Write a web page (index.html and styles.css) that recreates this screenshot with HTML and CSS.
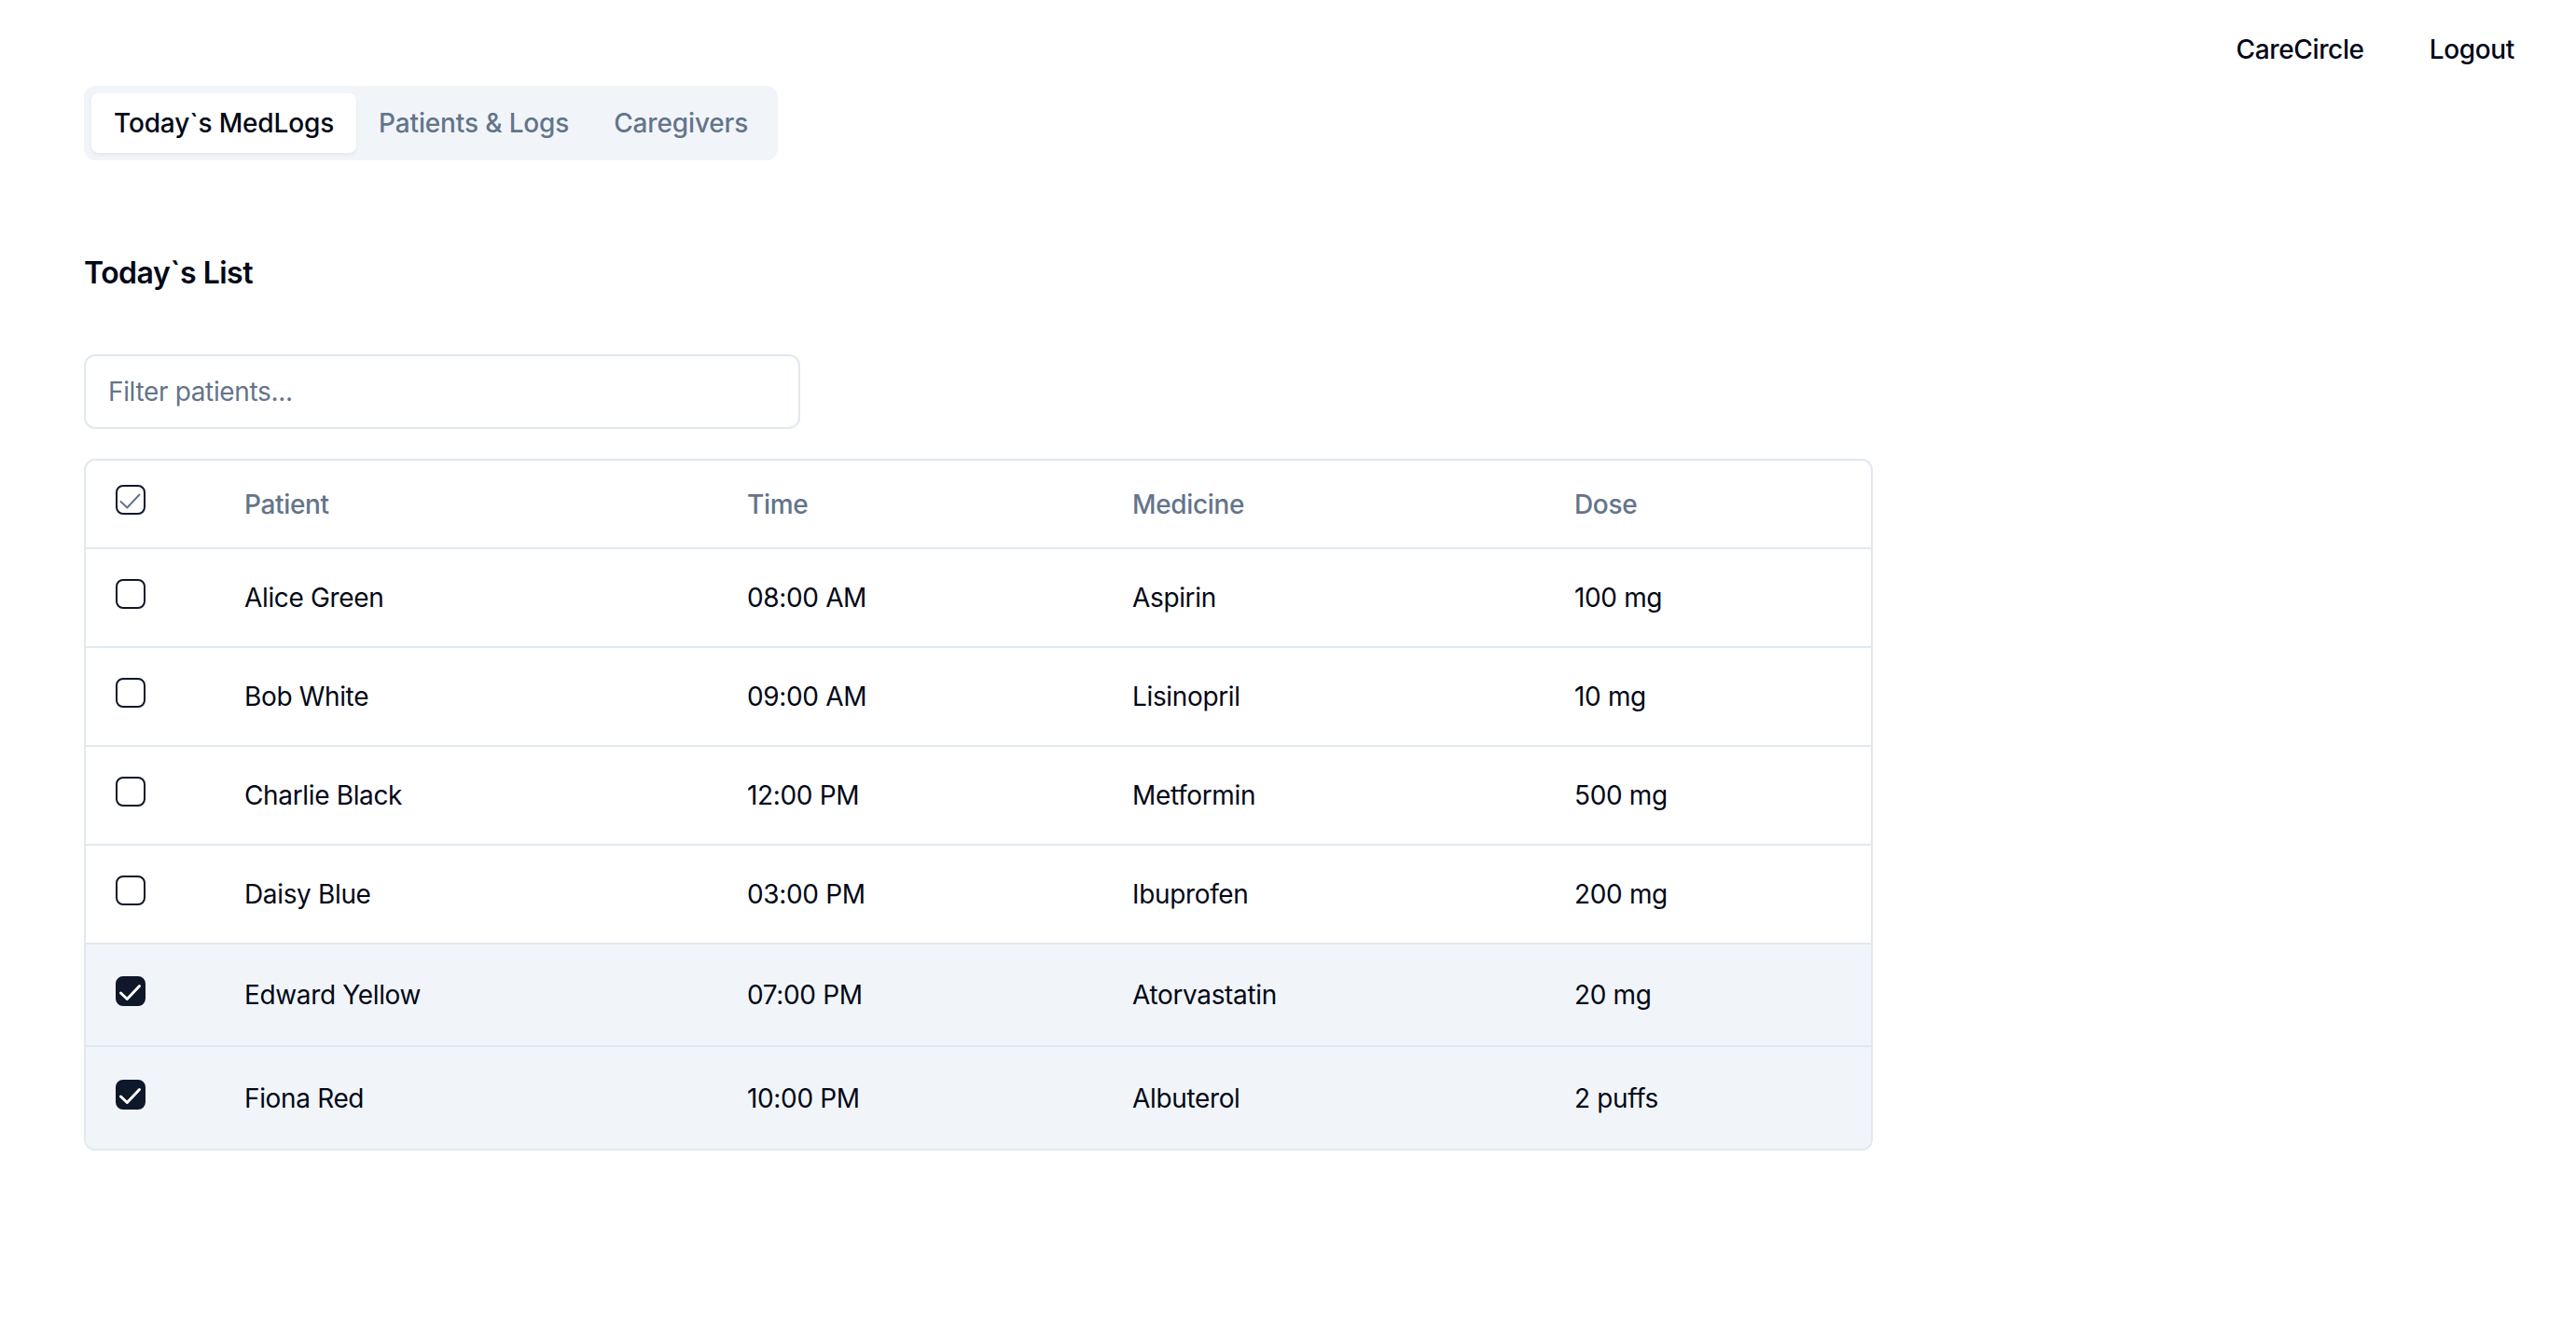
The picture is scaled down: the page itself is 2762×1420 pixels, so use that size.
FILE: index.html
```html
<!DOCTYPE html>
<html lang="en">
<head>
<meta charset="utf-8">
<title>CareCircle</title>
<link rel="stylesheet" href="styles.css">
</head>
<body>
<header class="topnav">
  <a class="navlink">CareCircle</a>
  <a class="navlink">Logout</a>
</header>
<main class="main">
  <div class="tabs">
    <button class="tab tab-active">Today`s MedLogs</button>
    <button class="tab">Patients &amp; Logs</button>
    <button class="tab">Caregivers</button>
  </div>
  <h2 class="title">Today`s List</h2>
  <div class="filter">Filter patients...</div>
  <div class="table-wrap">
    <table class="table">
      <colgroup>
        <col class="c-check"><col class="c-patient"><col class="c-time"><col class="c-med"><col class="c-dose">
      </colgroup>
      <thead>
        <tr class="head-row">
          <th><span class="cb cb-head"><svg viewBox="0 0 32 32"><path d="M5.5 18 L12.3 24.5 L25.5 10.5"/></svg></span></th>
          <th>Patient</th><th>Time</th><th>Medicine</th><th>Dose</th>
        </tr>
      </thead>
      <tbody>
        <tr class="row"><td><span class="cb"></span></td><td>Alice Green</td><td>08:00 AM</td><td>Aspirin</td><td>100 mg</td></tr>
        <tr class="row"><td><span class="cb"></span></td><td>Bob White</td><td>09:00 AM</td><td>Lisinopril</td><td>10 mg</td></tr>
        <tr class="row"><td><span class="cb"></span></td><td>Charlie Black</td><td>12:00 PM</td><td>Metformin</td><td>500 mg</td></tr>
        <tr class="row"><td><span class="cb"></span></td><td>Daisy Blue</td><td>03:00 PM</td><td>Ibuprofen</td><td>200 mg</td></tr>
        <tr class="row row-sel"><td><span class="cb cb-on"><svg viewBox="0 0 32 32"><path d="M5.5 18 L12.3 24.5 L25.5 10.5"/></svg></span></td><td>Edward Yellow</td><td>07:00 PM</td><td>Atorvastatin</td><td>20 mg</td></tr>
        <tr class="row row-sel row-last"><td><span class="cb cb-on"><svg viewBox="0 0 32 32"><path d="M5.5 18 L12.3 24.5 L25.5 10.5"/></svg></span></td><td>Fiona Red</td><td>10:00 PM</td><td>Albuterol</td><td>2 puffs</td></tr>
      </tbody>
    </table>
  </div>
</main>
</body>
</html>
```
FILE: styles.css
```css
* { box-sizing: border-box; }
html, body { margin: 0; padding: 0; background: #ffffff; }
body {
  font-family: Inter, "Liberation Sans", sans-serif;
  color: #020817;
  font-size: 28px;
  line-height: 40px;
  letter-spacing: -0.35px;
}
.topnav {
  display: flex;
  justify-content: flex-end;
  gap: 70px;
  padding: 33px 66px 0 0;
  height: 92px;
}
.navlink {
  font-size: 28px;
  font-weight: 500;
  line-height: 40px;
  color: #020817;
}
.main { padding-left: 90px; }
.tabs {
  display: inline-flex;
  align-items: center;
  background: #f1f5f9;
  border-radius: 12px;
  padding: 8px;
  height: 80px;
}
.tab {
  font-family: inherit;
  font-size: 28px;
  font-weight: 500;
  line-height: 40px;
  letter-spacing: -0.15px;
  color: #64748b;
  background: transparent;
  border: 0;
  border-radius: 8px;
  padding: 12px 24px;
  height: 64px;
}
.tab-active {
  background: #ffffff;
  color: #020817;
  box-shadow: 0 2px 4px rgba(0,0,0,0.06);
}
.title {
  margin: 97px 0 0 0;
  font-size: 32px;
  line-height: 48px;
  font-weight: 600;
  letter-spacing: -0.5px;
  color: #020817;
}
.filter {
  margin-top: 63px;
  width: 768px;
  height: 80px;
  border: 2px solid #e2e8f0;
  border-radius: 12px;
  padding: 0 24px;
  display: flex;
  align-items: center;
  color: #64748b;
  font-size: 28px;
}
.table-wrap {
  margin-top: 32px;
  width: 1918px;
  border: 2px solid #e2e8f0;
  border-radius: 12px;
  overflow: hidden;
}
.table {
  width: 100%;
  border-collapse: collapse;
  table-layout: fixed;
}
.c-check { width: 138px; }
.c-patient { width: 539px; }
.c-time { width: 413px; }
.c-med { width: 474px; }
.c-dose { width: 350px; }
.table th {
  text-align: left;
  font-weight: 500;
  color: #64748b;
  padding: 0 32px;
  height: 94px;
  border-bottom: 2px solid #e2e8f0;
}
.table td {
  padding: 0 32px;
  vertical-align: middle;
}
.row { height: 106px; }
.row td { border-bottom: 2px solid #e2e8f0; }
.row-sel { height: 110px; background: #f1f5f9; }
.row-last td { border-bottom: 0; }
.cb {
  display: block;
  width: 32px;
  height: 32px;
  border: 2px solid #0f172a;
  border-radius: 8px;
  margin-top: -8px;
}
.cb svg { display: block; margin: -2px; width: 32px; height: 32px; }
.cb path { fill: none; stroke-linecap: round; stroke-linejoin: round; }
.cb-head { margin-top: -10px; }
.cb-head path { stroke: #64748b; stroke-width: 2; }
.cb-on { background: #0f172a; }
.cb-on path { stroke: #ffffff; stroke-width: 3; }
```
